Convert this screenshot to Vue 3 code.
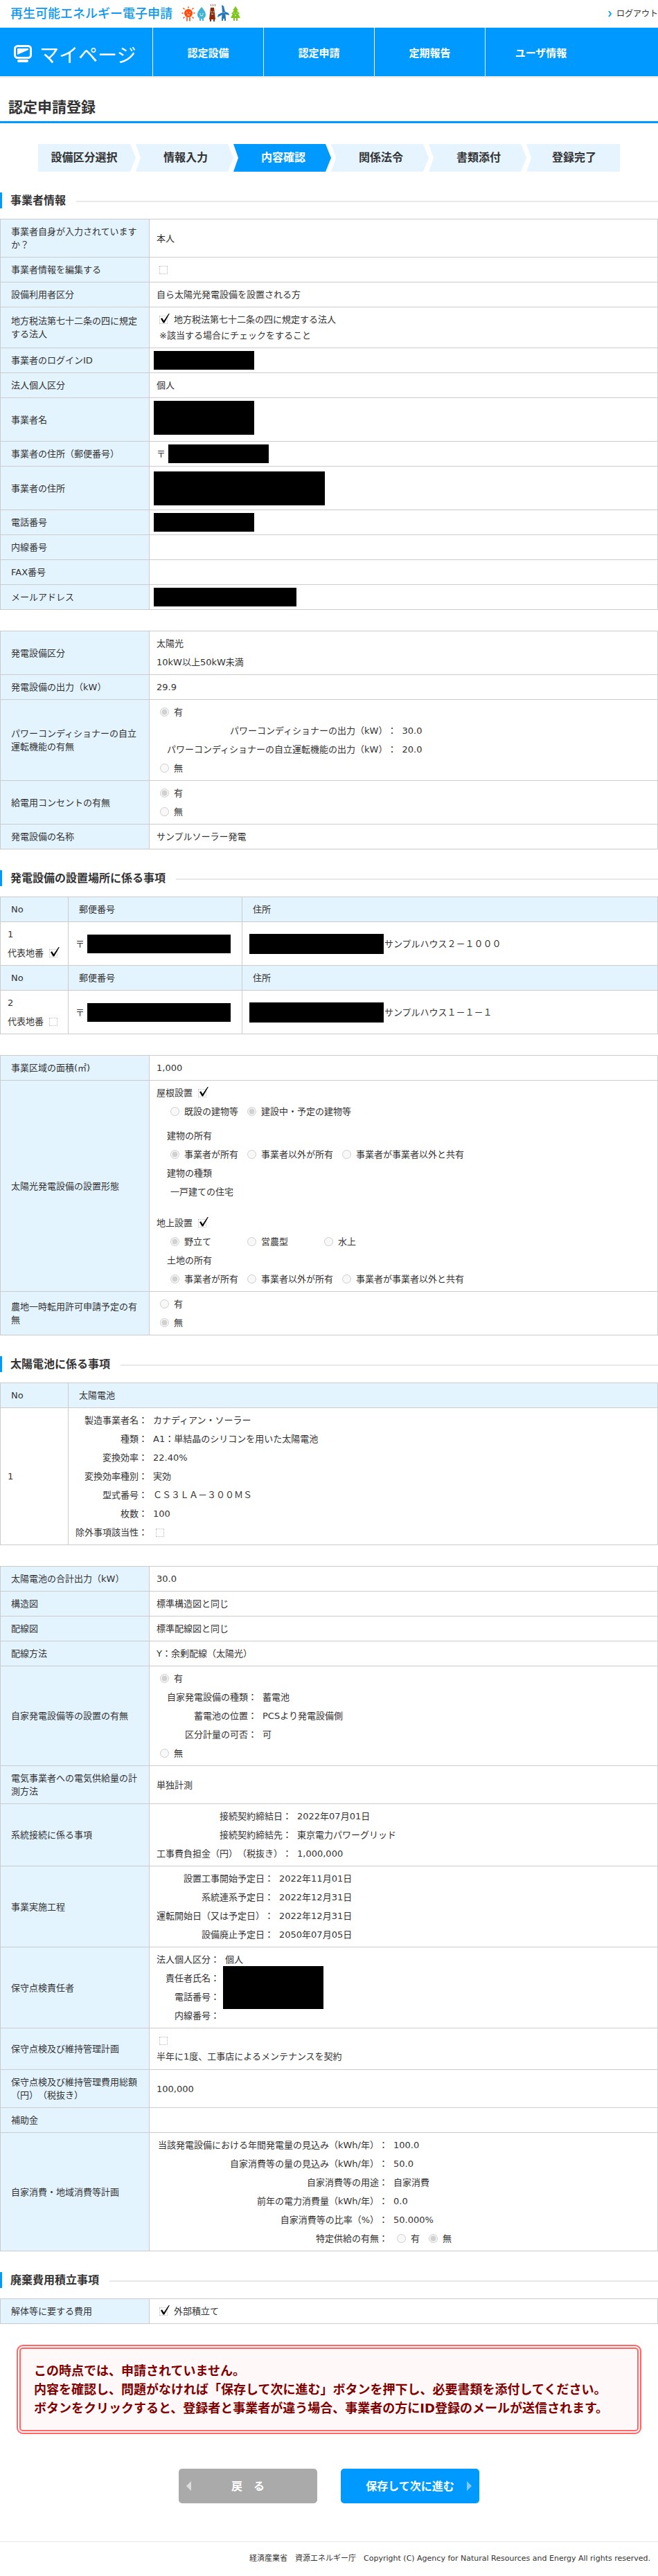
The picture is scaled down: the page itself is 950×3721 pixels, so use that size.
<script setup>
const menu = ['認定設備', '認定申請', '定期報告', 'ユーザ情報']
const steps = ['設備区分選択', '情報入力', '内容確認', '関係法令', '書類添付', '登録完了']
const activeStep = 2

const yesNo = ['有', '無']
const owners = ['事業者が所有', '事業者以外が所有', '事業者が事業者以外と共有']

const sites = [
  { no: 1, main: true, address: 'サンプルハウス２－１０００' },
  { no: 2, main: false, address: 'サンプルハウス１－１－１' }
]

const panel = [
  ['製造事業者名', 'カナディアン・ソーラー'],
  ['種類', 'A1：単結晶のシリコンを用いた太陽電池'],
  ['変換効率', '22.40%'],
  ['変換効率種別', '実効'],
  ['型式番号', 'ＣＳ３ＬＡ－３００ＭＳ'],
  ['枚数', '100']
]

const drawings = [
  ['太陽電池の合計出力（kW）', '30.0'],
  ['構造図', '標準構造図と同じ'],
  ['配線図', '標準配線図と同じ'],
  ['配線方法', 'Y：余剰配線（太陽光）']
]

const ownGeneration = [
  ['自家発電設備の種類', '蓄電池'],
  ['蓄電池の位置', 'PCSより発電設備側'],
  ['区分計量の可否', '可']
]

const connection = [
  ['接続契約締結日', '2022年07月01日'],
  ['接続契約締結先', '東京電力パワーグリッド'],
  ['工事費負担金（円）（税抜き）', '1,000,000']
]

const schedule = [
  ['設置工事開始予定日', '2022年11月01日'],
  ['系統連系予定日', '2022年12月31日'],
  ['運転開始日（又は予定日）', '2022年12月31日'],
  ['設備廃止予定日', '2050年07月05日']
]

const consumption = [
  ['当該発電設備における年間発電量の見込み（kWh/年）', '100.0'],
  ['自家消費等の量の見込み（kWh/年）', '50.0'],
  ['自家消費等の用途', '自家消費'],
  ['前年の電力消費量（kWh/年）', '0.0'],
  ['自家消費等の比率（%）', '50.000%']
]
</script>

<template>
  <div class="page">
    <header>
      <div class="brand-bar">
        <a href="#" class="brand">
          <span>再生可能エネルギー電子申請</span>
          <svg width="88" height="28" viewBox="0 0 88 28" aria-hidden="true">
            <g fill="#ff4a0a" stroke="#ff4a0a">
              <circle cx="11" cy="15" r="6" stroke="none" />
              <g stroke-width="1.6" stroke-linecap="round">
                <path d="M11 7V6M5 9l-1-1M17 9l1-1M3 15H2M19 15h1M5 21l-1 1M17 21l1 1M9 21v5M13 21v5" />
              </g>
            </g>
            <path d="M30 6c3 4 6 7 6 11 0 4-3 6-6 6s-6-2-6-6c0-4 3-7 6-11z" fill="#42b4d3" />
            <path d="M28 22v4M32 22v4" stroke="#42b4d3" stroke-width="2" />
            <path d="M43 7h5l2 17h-9z" fill="#8c2b0a" />
            <path d="M43 23v4M48 23v4" stroke="#8c2b0a" stroke-width="2" />
            <path d="M43 5l1-1-1-2M46 5l1-1-1-2M49 5l1-1-1-2" stroke="#b0644a" fill="none" />
            <g fill="#2577b8">
              <path d="M60 13L59 3l3 2 2 8z" />
              <path d="M62 13l-8 4-1 4 9-5z" />
              <path d="M62 12l7 3 1 3-8-2z" />
              <path d="M60 12h4l1 11h-6z" />
            </g>
            <path d="M60 22v4M64 22v4" stroke="#2577b8" stroke-width="2" />
            <path d="M79 5l4 6h-2l4 5h-2l3 6H72l3-6h-2l4-5h-2z" fill="#7ec41a" />
            <path d="M77 22v4M81 22v4" stroke="#7ec41a" stroke-width="2" />
            <g fill="#fff">
              <circle cx="9" cy="14" r="0.8" /><circle cx="13" cy="14" r="0.8" />
              <circle cx="28" cy="16" r="0.8" /><circle cx="32" cy="16" r="0.8" />
              <circle cx="44" cy="13" r="0.7" /><circle cx="47" cy="13" r="0.7" />
              <circle cx="61" cy="14" r="0.6" /><circle cx="63" cy="14" r="0.6" />
              <circle cx="77" cy="15" r="0.7" /><circle cx="81" cy="15" r="0.7" />
            </g>
            <path d="M9 17q2 2 4 0M28 18q2 2 4 0M44 16q2 1 3 0M78 18q1 1 2 0" fill="none" stroke="#fff" />
          </svg>
        </a>
        <a href="#" class="logout">
          <svg width="6" height="10" viewBox="0 0 6 10" aria-hidden="true">
            <path d="M1 1l3 4-3 4" fill="none" stroke="#18a0e8" stroke-width="2" />
          </svg>
          ログアウト
        </a>
      </div>
      <nav>
        <a href="#" class="mypage">
          <svg width="26" height="26" viewBox="0 0 26 26" aria-hidden="true">
            <rect x="1.5" y="1.5" width="23" height="17" rx="4" fill="none" stroke="#fff" stroke-width="3" />
            <path d="M5 5h16v2L5 14z" fill="#fff" />
            <rect x="5" y="21" width="16" height="4" rx="2" fill="#fff" />
          </svg>
          マイページ
        </a>
        <a v-for="m in menu" :key="m" href="#" class="menu-item">{{ m }}</a>
      </nav>
    </header>

    <main>
      <h1>認定申請登録</h1>

      <ol class="steps">
        <li v-for="(s, i) in steps" :key="s" :class="{ active: i === activeStep }">{{ s }}</li>
      </ol>

      <h2>事業者情報</h2>
      <table>
        <colgroup><col class="c-label" /><col /></colgroup>
        <tbody>
          <tr><th scope="row">事業者自身が入力されていますか？</th><td>本人</td></tr>
          <tr>
            <th scope="row">事業者情報を編集する</th>
            <td><div class="line"><input type="checkbox" class="lead" disabled aria-label="事業者情報を編集する" /></div></td>
          </tr>
          <tr><th scope="row">設備利用者区分</th><td>自ら太陽光発電設備を設置される方</td></tr>
          <tr>
            <th scope="row">地方税法第七十二条の四に規定する法人</th>
            <td>
              <label class="line"><input type="checkbox" class="lead" checked disabled />地方税法第七十二条の四に規定する法人</label>
              <p class="note">※該当する場合にチェックをすること</p>
            </td>
          </tr>
          <tr><th scope="row">事業者のログインID</th><td><div class="line"><span class="mask pull"></span></div></td></tr>
          <tr><th scope="row">法人個人区分</th><td>個人</td></tr>
          <tr><th scope="row">事業者名</th><td><div class="line double top"><span class="mask tall pull"></span></div></td></tr>
          <tr><th scope="row">事業者の住所（郵便番号）</th><td><div class="line">〒<span class="mask after"></span></div></td></tr>
          <tr><th scope="row">事業者の住所</th><td><div class="line double"><span class="mask tall street pull"></span></div></td></tr>
          <tr><th scope="row">電話番号</th><td><div class="line"><span class="mask pull"></span></div></td></tr>
          <tr><th scope="row">内線番号</th><td></td></tr>
          <tr><th scope="row">FAX番号</th><td></td></tr>
          <tr><th scope="row">メールアドレス</th><td><div class="line"><span class="mask mail pull"></span></div></td></tr>
        </tbody>
      </table>

      <table>
        <colgroup><col class="c-label" /><col /></colgroup>
        <tbody>
          <tr>
            <th scope="row">発電設備区分</th>
            <td><div class="line">太陽光</div><div class="line">10kW以上50kW未満</div></td>
          </tr>
          <tr><th scope="row">発電設備の出力（kW）</th><td>29.9</td></tr>
          <tr>
            <th scope="row">パワーコンディショナーの自立運転機能の有無</th>
            <td>
              <label class="option"><input type="radio" name="pcs" checked disabled />有</label>
              <dl class="pairs indent">
                <dt>パワーコンディショナーの出力（kW）：</dt><dd>30.0</dd>
                <dt>パワーコンディショナーの自立運転機能の出力（kW）：</dt><dd>20.0</dd>
              </dl>
              <label class="option"><input type="radio" name="pcs" disabled />無</label>
            </td>
          </tr>
          <tr>
            <th scope="row">給電用コンセントの有無</th>
            <td>
              <label v-for="(o, i) in yesNo" :key="o" class="option"><input type="radio" name="outlet" :checked="i === 0" disabled />{{ o }}</label>
            </td>
          </tr>
          <tr><th scope="row">発電設備の名称</th><td>サンプルソーラー発電</td></tr>
        </tbody>
      </table>

      <h2>発電設備の設置場所に係る事項</h2>
      <table>
        <colgroup><col class="c-no" /><col class="c-zip" /><col /></colgroup>
        <tbody v-for="s in sites" :key="s.no">
          <tr><th scope="col">No</th><th scope="col">郵便番号</th><th scope="col">住所</th></tr>
          <tr>
            <td>
              <div class="line">{{ s.no }}</div>
              <label class="line">代表地番<input type="checkbox" class="trail" :checked="s.main" disabled /></label>
            </td>
            <td><div class="line">〒<span class="mask zip after"></span></div></td>
            <td><div class="line"><span class="mask town"></span>{{ s.address }}</div></td>
          </tr>
        </tbody>
      </table>

      <table>
        <colgroup><col class="c-label" /><col /></colgroup>
        <tbody>
          <tr><th scope="row">事業区域の面積(㎡)</th><td>1,000</td></tr>
          <tr>
            <th scope="row">太陽光発電設備の設置形態</th>
            <td>
              <label class="line">屋根設置<input type="checkbox" class="trail" checked disabled /></label>
              <div class="line indent">
                <label class="option"><input type="radio" name="roof" disabled />既設の建物等</label>
                <label class="option"><input type="radio" name="roof" checked disabled />建設中・予定の建物等</label>
              </div>
              <div class="line indent gap-s">建物の所有</div>
              <div class="line indent">
                <label v-for="(o, i) in owners" :key="o" class="option"><input type="radio" name="building" :checked="i === 0" disabled />{{ o }}</label>
              </div>
              <div class="line indent">建物の種類</div>
              <div class="line indent deep">一戸建ての住宅</div>
              <label class="line gap-l">地上設置<input type="checkbox" class="trail" checked disabled /></label>
              <div class="line indent even">
                <label class="option"><input type="radio" name="ground" checked disabled />野立て</label>
                <label class="option"><input type="radio" name="ground" disabled />営農型</label>
                <label class="option"><input type="radio" name="ground" disabled />水上</label>
              </div>
              <div class="line indent">土地の所有</div>
              <div class="line indent">
                <label v-for="(o, i) in owners" :key="o" class="option"><input type="radio" name="land" :checked="i === 0" disabled />{{ o }}</label>
              </div>
            </td>
          </tr>
          <tr>
            <th scope="row">農地一時転用許可申請予定の有無</th>
            <td>
              <label v-for="(o, i) in yesNo" :key="o" class="option"><input type="radio" name="farm" :checked="i === 1" disabled />{{ o }}</label>
            </td>
          </tr>
        </tbody>
      </table>

      <h2>太陽電池に係る事項</h2>
      <table>
        <colgroup><col class="c-no" /><col /></colgroup>
        <tbody>
          <tr><th scope="col">No</th><th scope="col">太陽電池</th></tr>
          <tr>
            <td>1</td>
            <td>
              <dl class="pairs">
                <template v-for="[k, v] in panel" :key="k"><dt>{{ k }}：</dt><dd>{{ v }}</dd></template>
                <dt>除外事項該当性：</dt>
                <dd class="line"><input type="checkbox" class="lead" disabled aria-label="除外事項該当性" /></dd>
              </dl>
            </td>
          </tr>
        </tbody>
      </table>

      <table>
        <colgroup><col class="c-label" /><col /></colgroup>
        <tbody>
          <tr v-for="[k, v] in drawings" :key="k"><th scope="row">{{ k }}</th><td>{{ v }}</td></tr>
          <tr>
            <th scope="row">自家発電設備等の設置の有無</th>
            <td>
              <label class="option"><input type="radio" name="own" checked disabled />有</label>
              <dl class="pairs indent">
                <template v-for="[k, v] in ownGeneration" :key="k"><dt>{{ k }}：</dt><dd>{{ v }}</dd></template>
              </dl>
              <label class="option"><input type="radio" name="own" disabled />無</label>
            </td>
          </tr>
          <tr><th scope="row">電気事業者への電気供給量の計測方法</th><td>単独計測</td></tr>
          <tr>
            <th scope="row">系統接続に係る事項</th>
            <td>
              <dl class="pairs">
                <template v-for="[k, v] in connection" :key="k"><dt>{{ k }}：</dt><dd>{{ v }}</dd></template>
              </dl>
            </td>
          </tr>
          <tr>
            <th scope="row">事業実施工程</th>
            <td>
              <dl class="pairs">
                <template v-for="[k, v] in schedule" :key="k"><dt>{{ k }}：</dt><dd>{{ v }}</dd></template>
              </dl>
            </td>
          </tr>
          <tr>
            <th scope="row">保守点検責任者</th>
            <td>
              <dl class="pairs">
                <dt>法人個人区分：</dt><dd>個人</dd>
                <dt>責任者氏名：</dt>
                <dt>電話番号：</dt>
                <dd class="person"><span class="mask block"></span></dd>
                <dt>内線番号：</dt>
              </dl>
            </td>
          </tr>
          <tr>
            <th scope="row">保守点検及び維持管理計画</th>
            <td>
              <div class="line"><input type="checkbox" class="lead" disabled aria-label="保守点検及び維持管理計画" /></div>
              <p class="memo">半年に1度、工事店によるメンテナンスを契約</p>
            </td>
          </tr>
          <tr><th scope="row">保守点検及び維持管理費用総額（円）（税抜き）</th><td>100,000</td></tr>
          <tr><th scope="row">補助金</th><td></td></tr>
          <tr>
            <th scope="row">自家消費・地域消費等計画</th>
            <td>
              <dl class="pairs wide">
                <template v-for="[k, v] in consumption" :key="k"><dt>{{ k }}：</dt><dd>{{ v }}</dd></template>
                <dt>特定供給の有無：</dt>
                <dd class="line">
                  <label v-for="(o, i) in yesNo" :key="o" class="option"><input type="radio" name="supply" :checked="i === 1" disabled />{{ o }}</label>
                </dd>
              </dl>
            </td>
          </tr>
        </tbody>
      </table>

      <h2>廃棄費用積立事項</h2>
      <table>
        <colgroup><col class="c-label" /><col /></colgroup>
        <tbody>
          <tr>
            <th scope="row">解体等に要する費用</th>
            <td><label class="line"><input type="checkbox" class="lead" checked disabled />外部積立て</label></td>
          </tr>
        </tbody>
      </table>

      <div class="alert" role="alert">
        <p>この時点では、申請されていません。</p>
        <p>内容を確認し、問題がなければ「保存して次に進む」ボタンを押下し、必要書類を添付してください。</p>
        <p>ボタンをクリックすると、登録者と事業者が違う場合、事業者の方にID登録のメールが送信されます。</p>
      </div>

      <div class="actions">
        <button type="button" class="back">戻　る</button>
        <button type="button" class="next">保存して次に進む</button>
      </div>
    </main>

    <footer>経済産業省　資源エネルギー庁　Copyright (C) Agency for Natural Resources and Energy All rights reserved.</footer>
  </div>
</template>

<style>
body {
  margin: 0;
  background: #fff;
}
</style>

<style scoped>
.page {
  color: #333;
  font-family: "DejaVu Sans", "Noto Sans CJK JP", sans-serif;
  font-size: 13px;
  line-height: 27px;
  text-spacing-trim: space-all;
}

a {
  color: inherit;
  text-decoration: none;
}

p, dl, dd, ol {
  margin: 0;
  padding: 0;
}

.brand-bar {
  display: flex;
  justify-content: space-between;
  align-items: center;
  height: 40px;
  padding-left: 15px;
}

.brand {
  display: flex;
  align-items: center;
  gap: 12px;
  height: 36px;
  align-self: flex-start;
  color: #0e98f5;
  font-family: "Noto Sans CJK JP", sans-serif;
  font-size: 18px;
  font-weight: 500;
}

.logout {
  display: flex;
  align-items: center;
  gap: 6px;
  font-size: 12px;
}

nav {
  display: flex;
  height: 70px;
  background: #09f;
  border-bottom: 2px solid #e8e8e8;
  color: #fff;
  font-family: "Noto Sans CJK JP", sans-serif;
}

.mypage {
  box-sizing: border-box;
  display: flex;
  align-items: center;
  gap: 11px;
  width: 221px;
  padding: 6px 0 0 20px;
  border-right: 1px solid #fff;
  font-size: 28px;
}

.menu-item {
  box-sizing: border-box;
  display: flex;
  align-items: center;
  justify-content: center;
  width: 160px;
  border-right: 1px solid #fff;
  font-size: 15px;
  font-weight: 700;
}

.menu-item:last-child {
  border-right: 0;
}

h1 {
  margin: 0 0 30px;
  padding: 28px 12px 5px;
  border-bottom: 3px solid #09f;
  font-size: 21px;
  font-weight: 700;
  line-height: 30px;
}

.steps {
  display: flex;
  margin: 0 55px;
  list-style: none;
  font-size: 16px;
  font-weight: 700;
  line-height: 40px;
  text-align: center;
}

.steps li {
  box-sizing: border-box;
  flex: 1 1 141px;
  padding-left: 3px;
  background: #e5f4ff;
  clip-path: polygon(0 0, calc(100% - 8px) 0, 100% 50%, calc(100% - 8px) 100%, 0 100%, 7px 50%);
}

.steps li:first-child {
  padding: 0 8px 0 0;
  clip-path: polygon(0 0, calc(100% - 8px) 0, 100% 50%, calc(100% - 8px) 100%, 0 100%);
}

.steps li:last-child {
  flex-basis: 135px;
  clip-path: polygon(0 0, 100% 0, 100% 100%, 0 100%, 7px 50%);
}

.steps .active {
  background: #09f;
  color: #fff;
}

h2 {
  display: flex;
  align-items: center;
  gap: 15px;
  margin: 30px 0 15px;
  padding-left: 12px;
  border-left: 3px solid #09f;
  font-size: 16px;
  font-weight: 700;
  line-height: 23px;
}

h2::after {
  content: "";
  flex: 1;
  height: 2px;
  margin-top: 2px;
  background: #e8e8e8;
}

table {
  width: 100%;
  margin-bottom: 30px;
  border-collapse: collapse;
  table-layout: fixed;
}

.c-label {
  width: 215px;
}

.c-no {
  width: 98px;
}

.c-zip {
  width: 251px;
}

th, td {
  border: 1px solid #ccc;
  text-align: left;
  vertical-align: middle;
}

th {
  padding: 8px 15px;
  background: #e3f4ff;
  font-weight: 400;
  line-height: 19px;
}

td {
  height: 27px;
  padding: 4px 10px;
}

.line {
  display: flex;
  align-items: center;
  height: 27px;
}

.double {
  height: 54px;
}

.top {
  align-items: flex-start;
}

.indent {
  padding-left: 15px;
}

.deep {
  padding-left: 20px;
}

.gap-s {
  margin-top: 8px;
}

.gap-l {
  margin-top: 18px;
}

.option {
  display: flex;
  align-items: center;
  gap: 7px;
  height: 27px;
  padding: 0 8px 0 5px;
}

.even .option {
  box-sizing: border-box;
  width: 111px;
}

input {
  flex: none;
  margin: 0;
}

input[type="radio"] {
  width: 13px;
  height: 13px;
}

input[type="checkbox"] {
  appearance: none;
  box-sizing: border-box;
  position: relative;
  width: 12px;
  height: 12px;
  border: 1px dotted #bbb;
}

input[type="checkbox"]:checked::after {
  content: "";
  position: absolute;
  left: 1px;
  top: -4px;
  width: 13px;
  height: 14px;
  background: #000;
  clip-path: polygon(0 55%, 16% 48%, 35% 76%, 92% 0, 100% 2%, 40% 100%, 28% 100%);
}

.lead {
  margin: 0 9px 0 4px;
}

.trail {
  margin-left: 8px;
}

.note {
  padding: 0 0 4px 4px;
  line-height: 19px;
}

.memo {
  padding-bottom: 4px;
  line-height: 20px;
}

.pairs {
  display: grid;
  grid-template-columns: max-content 1fr;
  grid-auto-rows: 27px;
  column-gap: 8px;
}

.wide {
  grid-template-columns: 334px 1fr;
}

.pairs dt {
  grid-column: 1;
  text-align: right;
}

.pairs dd {
  grid-column: 2;
}

.pairs .person {
  grid-row: 2 / span 2;
  display: flex;
  align-items: center;
  margin-left: -3px;
}

.mask {
  flex: none;
  width: 145px;
  height: 27px;
  background: #000;
}

.pull {
  margin-left: -4px;
}

.after {
  margin-left: 4px;
}

.tall {
  height: 49px;
}

.street {
  width: 247px;
}

.mail {
  width: 206px;
}

.zip {
  width: 207px;
}

.town {
  width: 194px;
  height: 29px;
  margin-right: 1px;
}

.block {
  height: 62px;
}

.alert {
  margin: 0 24px;
  padding: 18px 19px;
  border: 6px double #f66;
  border-radius: 9px;
  background: #fff8f8;
  color: #800000;
  font-size: 18px;
  font-weight: 700;
}

.actions {
  display: flex;
  justify-content: center;
  gap: 34px;
  margin: 50px 0 55px;
}

button {
  display: flex;
  align-items: center;
  justify-content: center;
  position: relative;
  width: 200px;
  height: 50px;
  padding: 0;
  border: 0;
  border-radius: 5px;
  color: #fff;
  font: inherit;
  font-size: 16px;
  font-weight: 700;
}

.back {
  background: #aaa;
}

.next {
  background: #09f;
}

.back::before,
.next::after {
  content: "";
  position: absolute;
  top: 18px;
  width: 7px;
  height: 14px;
}

.back::before {
  left: 11px;
  background: #ddd;
  clip-path: polygon(0 50%, 100% 0, 100% 100%);
}

.next::after {
  right: 11px;
  background: #80ccff;
  clip-path: polygon(100% 50%, 0 0, 0 100%);
}

footer {
  padding: 14px 11px 16px;
  border-top: 1px solid #e8e8e8;
  font-size: 11px;
  line-height: 19px;
  text-align: right;
}
</style>
